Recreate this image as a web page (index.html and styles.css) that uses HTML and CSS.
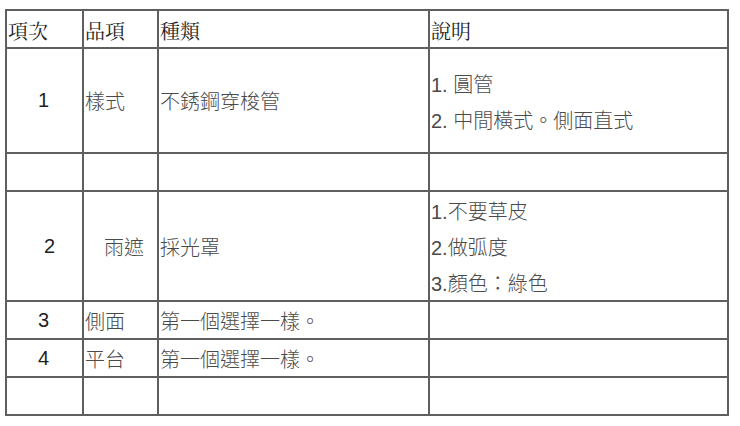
FILE: index.html
```html
<!DOCTYPE html>
<html lang="zh-Hant">
<head>
<meta charset="utf-8">
<title>規格表</title>
<link rel="stylesheet" href="styles.css">
</head>
<body>
<table class="spec">
  <colgroup>
    <col class="c-no">
    <col class="c-item">
    <col class="c-kind">
    <col class="c-desc">
  </colgroup>
  <thead>
    <tr class="r-head">
      <th>項次</th>
      <th>品項</th>
      <th>種類</th>
      <th>說明</th>
    </tr>
  </thead>
  <tbody>
    <tr class="r-1">
      <td class="no">1</td>
      <td>樣式</td>
      <td>不銹鋼穿梭管</td>
      <td class="desc"><p>1. 圓管</p><p>2. 中間橫式。側面直式</p></td>
    </tr>
    <tr class="r-std">
      <td></td><td></td><td></td><td></td>
    </tr>
    <tr class="r-2">
      <td class="no no-shift">2</td>
      <td class="indent">雨遮</td>
      <td>採光罩</td>
      <td class="desc"><p>1.不要草皮</p><p>2.做弧度</p><p>3.顏色：綠色</p></td>
    </tr>
    <tr class="r-std">
      <td class="no">3</td>
      <td>側面</td>
      <td>第一個選擇一樣。</td>
      <td></td>
    </tr>
    <tr class="r-std">
      <td class="no">4</td>
      <td>平台</td>
      <td>第一個選擇一樣。</td>
      <td></td>
    </tr>
    <tr class="r-std">
      <td></td><td></td><td></td><td></td>
    </tr>
  </tbody>
</table>
</body>
</html>
```

FILE: styles.css
```css
html, body {
  margin: 0;
  padding: 0;
  background: #ffffff;
}

body {
  padding: 9px 0 0 5px;
  font-family: "Liberation Sans", "Noto Sans CJK TC", sans-serif;
  font-size: 20px;
  color: #4a4a4a;
}

.spec {
  border-collapse: collapse;
  table-layout: fixed;
  width: 724px;
}

.c-no { width: 77px; }
.c-item { width: 75px; }
.c-kind { width: 271px; }
.c-desc { width: 299px; }

.spec th,
.spec td {
  border: 2px solid #5f5f5f;
  padding: 0 0 0 1px;
  text-align: left;
  vertical-align: middle;
  font-weight: 300;
  white-space: nowrap;
}

.spec th {
  font-family: "Noto Serif CJK TC", "Noto Sans CJK TC", serif;
  font-weight: normal;
  color: #1e1e1e;
  padding-top: 3px;
}

.r-head th { height: 33px; }
.r-1 td { height: 103px; }
.r-2 td { height: 106px; }
.r-std td { height: 36px; }

.spec td.no {
  text-align: center;
  color: #1e1e1e;
  padding-left: 0;
  padding-right: 2px;
}

.spec td.no-shift {
  padding-left: 10px;
  padding-right: 0;
}

.spec td.indent {
  padding-left: 20px;
}

.desc p {
  margin: 0;
  padding-top: 5px;
  line-height: 31px;
}
```
